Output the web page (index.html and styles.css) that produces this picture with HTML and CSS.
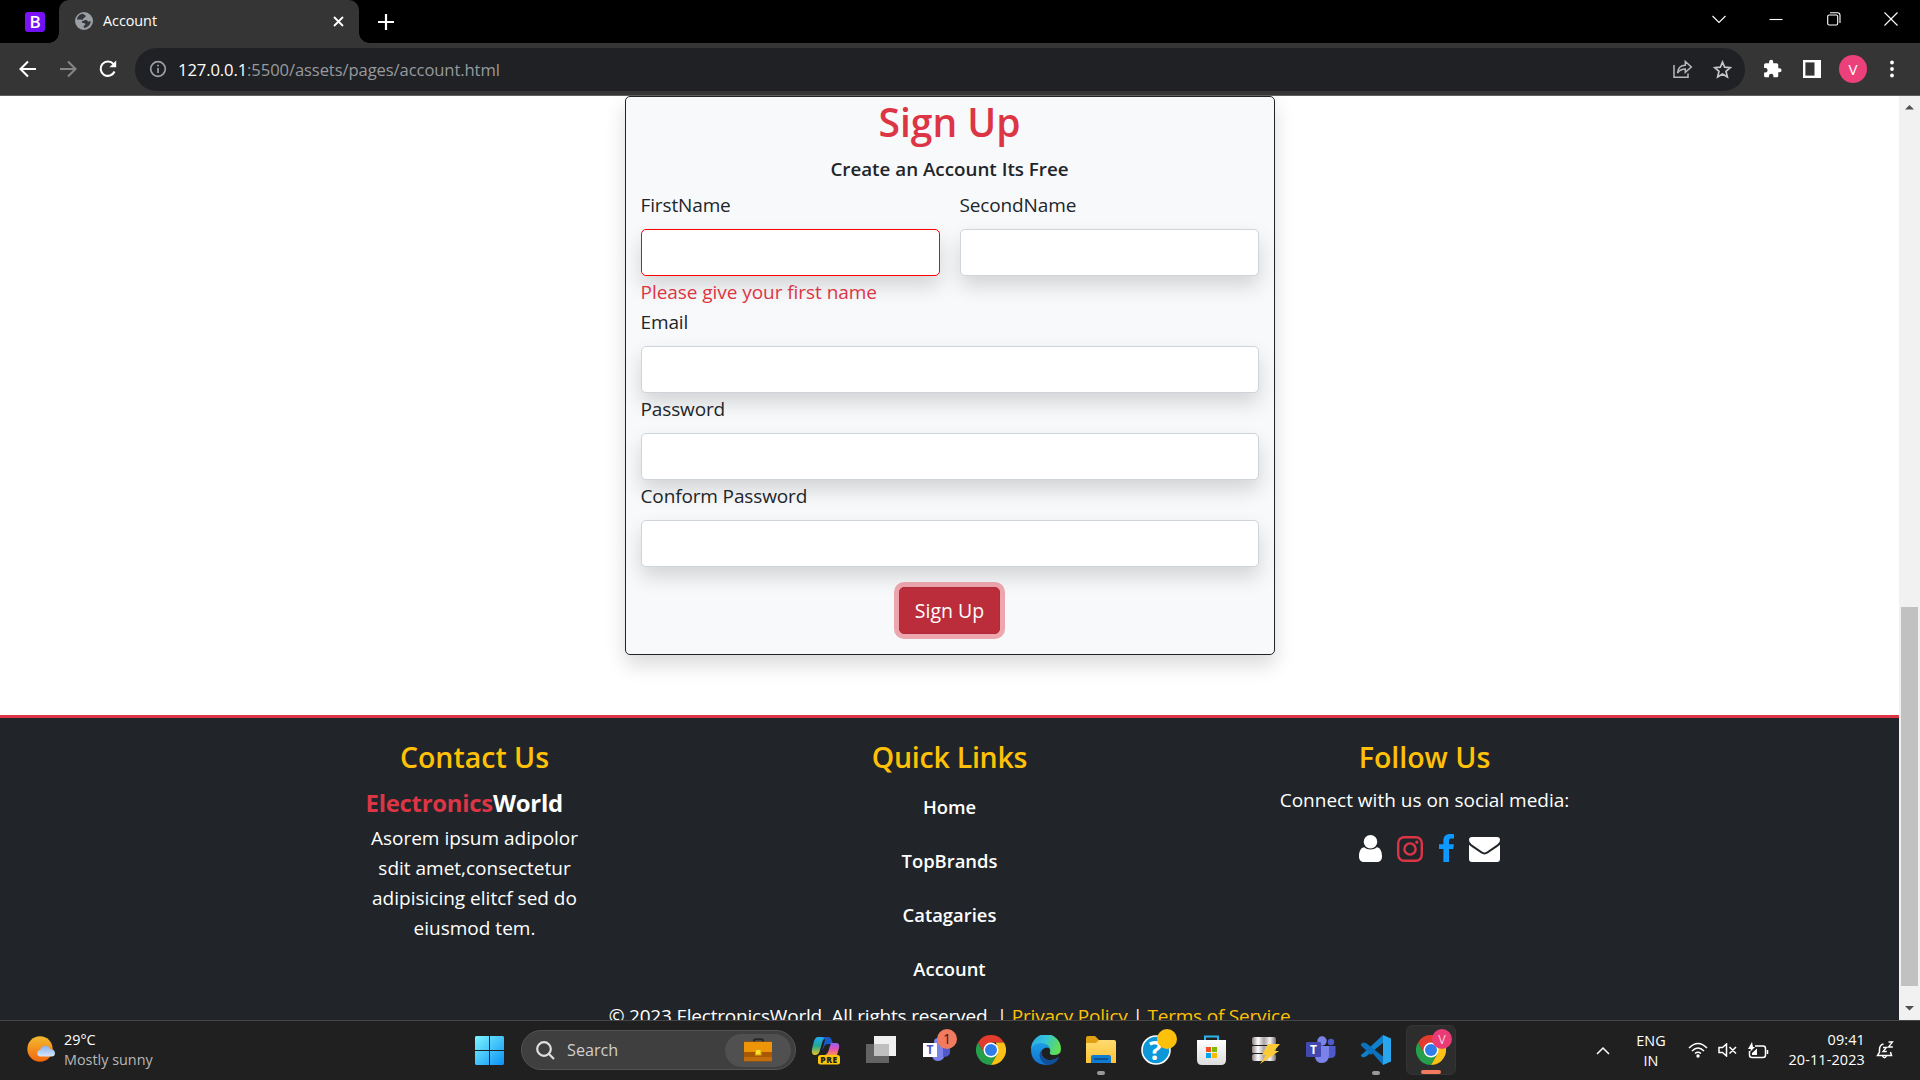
FILE: index.html
```html
<!DOCTYPE html>
<html lang="en">
<head>
<meta charset="utf-8">
<title>Account</title>
<link rel="stylesheet" href="styles.css">
</head>
<body>
<svg class="defs" width="0" height="0" aria-hidden="true">
  <defs>
    <linearGradient id="win" x1="0" y1="0" x2="1" y2="1"><stop offset="0" stop-color="#7df5ff"/><stop offset="1" stop-color="#0a91f5"/></linearGradient>
    <linearGradient id="sun" x1="0" y1="0" x2="0" y2="1"><stop offset="0" stop-color="#f3bb2f"/><stop offset="1" stop-color="#f4650d"/></linearGradient>
    <linearGradient id="cloud" x1="0" y1="0" x2="0" y2="1"><stop offset="0" stop-color="#85b1f4"/><stop offset="1" stop-color="#d9e6fa"/></linearGradient>
    <linearGradient id="copA" x1="0" y1="0" x2="0" y2="1"><stop offset="0" stop-color="#20a9f5"/><stop offset=".5" stop-color="#22a895"/><stop offset="1" stop-color="#f0c320"/></linearGradient>
    <linearGradient id="copB" x1="0" y1="0" x2="0" y2="1"><stop offset="0" stop-color="#9460f3"/><stop offset=".5" stop-color="#e052b5"/><stop offset="1" stop-color="#fd9151"/></linearGradient>
    <linearGradient id="edgeA" x1="0" y1="0" x2="1" y2=".3"><stop offset="0" stop-color="#2aa5e8"/><stop offset=".5" stop-color="#34c3dc"/><stop offset="1" stop-color="#61dd57"/></linearGradient>
    <linearGradient id="edgeB" x1="0" y1="0" x2="0" y2="1"><stop offset="0" stop-color="#1d9de4"/><stop offset="1" stop-color="#1170cf"/></linearGradient>
    <linearGradient id="folder" x1="0" y1="0" x2="0" y2="1"><stop offset="0" stop-color="#ffdb70"/><stop offset="1" stop-color="#ffc233"/></linearGradient>
    <linearGradient id="metal" x1="0" y1="0" x2="1" y2="0"><stop offset="0" stop-color="#8b8280"/><stop offset=".25" stop-color="#fff"/><stop offset=".5" stop-color="#aaa3a1"/><stop offset=".75" stop-color="#f4f2f2"/><stop offset="1" stop-color="#79706e"/></linearGradient>
    <linearGradient id="bag" x1="0" y1="0" x2="0" y2="1"><stop offset="0" stop-color="#fff"/><stop offset="1" stop-color="#dcdcdc"/></linearGradient>
    <symbol id="chrome" viewBox="0 0 30 30">
      <path d="M2 7.5A15 15 0 0 1 28 7.5H15V15L8.5 18.7Z" fill="#e33b2e"/>
      <path d="M2 7.5A15 15 0 0 0 15 30L21.5 18.8 8.5 18.7Z" fill="#259f4b"/>
      <path d="M28 7.5A15 15 0 0 1 15 30L21.5 18.8 20 7.5Z" fill="#fbc116"/>
      <circle cx="15" cy="15" r="7.5" fill="#fff"/><circle cx="15" cy="15" r="6" fill="#2f7de9"/>
    </symbol>
  </defs>
</svg>

<header class="browser">
  <div class="tabstrip">
    <div class="pinned"><span>B</span></div>
    <div class="tab">
      <svg width="18" height="18" viewBox="0 0 18 18"><circle cx="9" cy="9" r="9" fill="#9aa0a6"/><path d="M8 1.8C9 3 11 2.8 10.600 4.500 10.300 5.700 8.500 5.500 8.300 6.800 8 8 7 7.800 6 7.500L2 7.600C2.400 4.500 4.800 2 8 1.800Z M9.500 8.300C11 7.500 12.500 8.200 13 9.500L15.800 9.300C15.500 12.800 12.700 15.700 9 16L8.600 14.500C8.500 13.500 10.600 13 10.400 12 10.200 11 7 11.500 6.800 10 6.900 9 8.500 9 9.500 8.300Z" fill="#35363a"/></svg>
      <span class="tab-title">Account</span>
      <svg width="11" height="11" viewBox="0 0 11 11" stroke="#fff" stroke-width="1.800"><path d="M1 1 10 10M10 1 1 10"/></svg>
    </div>
    <svg class="newtab" width="16" height="16" viewBox="0 0 16 16" stroke="#fff" stroke-width="2.200"><path d="M8 0V16M0 8H16"/></svg>
    <div class="window-buttons">
      <svg width="14" height="14" viewBox="0 0 14 14"><path d="M.5 4 7 10.500 13.500 4"/></svg>
      <svg width="14" height="14" viewBox="0 0 14 14"><path d="M.5 7.500H13.500"/></svg>
      <svg width="14" height="14" viewBox="0 0 14 14"><rect x=".7" y="3" width="10" height="10" rx="1.500"/><path d="M3 .8H10.500Q13 .8 13 3.300V11"/></svg>
      <svg width="14" height="14" viewBox="0 0 14 14"><path d="M.5 .5 13.500 13.500M13.500 .5 .5 13.500"/></svg>
    </div>
  </div>
  <div class="toolbar">
    <div class="nav-buttons">
      <svg width="20" height="20" viewBox="0 0 20 20"><path d="M18 10H3M10 2.500 2.500 10 10 17.500"/></svg>
      <svg class="dim" width="20" height="20" viewBox="0 0 20 20"><path d="M2 10H17M10 2.500 17.500 10 10 17.500"/></svg>
      <svg width="20" height="20" viewBox="0 0 20 20"><path d="M16.500 12.500A7.200 7.200 0 1 1 15.500 5.200L17 7"/><path d="M18.200 1.500V8.300H11.400Z" fill="#fff" stroke="none"/></svg>
    </div>
    <div class="omnibox">
      <svg width="18" height="18" viewBox="0 0 18 18" fill="none" stroke="#9aa0a6" stroke-width="1.700"><circle cx="9" cy="9" r="7.300"/><path d="M9 8V13M9 4.800V6.600"/></svg>
      <span class="url"><b>127.0.0.1</b>:5500/assets/pages/account.html</span>
      <svg class="share" width="20" height="20" viewBox="0 0 20 20" fill="none" stroke="#b5b8bc" stroke-width="1.500"><path d="M1 6V18.300H15V14.500"/><path d="M4.500 14C5 8.500 8.500 6.300 12.300 6.200V2.500L18.300 8 12.300 13.300V9.900C9 9.900 6.500 11 4.500 14Z"/></svg>
      <svg width="19" height="19" viewBox="0 0 20 20" fill="none" stroke="#c4c7ca" stroke-width="1.800"><path d="M10 2.200 12.300 7.600 18.200 8.100 13.700 12 15.100 17.800 10 14.700 4.900 17.800 6.300 12 1.800 8.100 7.700 7.600Z"/></svg>
    </div>
    <div class="actions">
      <svg width="20" height="20" viewBox="0 0 24 24" fill="#fff"><path d="M21 11h-1.500V7c0-1.100-.9-2-2-2h-4V3.500a2.500 2.500 0 0 0-5 0V5h-4c-1.100 0-2 .9-2 2v3.800H4a2.700 2.700 0 0 1 0 5.400H2.500V20c0 1.100.9 2 2 2h3.800v-1.500a2.700 2.700 0 0 1 5.400 0V22h3.800c1.100 0 2-.9 2-2v-4H21a2.500 2.500 0 0 0 0-5Z"/></svg>
      <svg width="18" height="18" viewBox="0 0 18 18"><rect x="1.200" y="1.200" width="15.600" height="15.600" fill="none" stroke="#fff" stroke-width="2.400"/><path d="M11.500 1H17V17H11.500Z" fill="#fff"/></svg>
      <span class="avatar">V</span>
      <svg width="6" height="18" viewBox="0 0 6 18" fill="#fff"><circle cx="3" cy="2.500" r="1.900"/><circle cx="3" cy="9" r="1.900"/><circle cx="3" cy="15.500" r="1.900"/></svg>
    </div>
  </div>
</header>

<div class="viewport">
  <div class="page">
    <main class="main">
      <form class="signup">
        <h1>Sign Up</h1>
        <h5>Create an Account Its Free</h5>
        <div class="names">
          <div class="field"><label for="first">FirstName</label><input id="first" class="invalid" type="text"><p class="error">Please give your first name</p></div>
          <div class="field"><label for="second">SecondName</label><input id="second" type="text"></div>
        </div>
        <div class="field"><label for="email">Email</label><input id="email" type="text"></div>
        <div class="field"><label for="pass">Password</label><input id="pass" type="password"></div>
        <div class="field"><label for="confirm">Conform Password</label><input id="confirm" type="password"></div>
        <button type="button">Sign Up</button>
      </form>
    </main>
    <footer class="footer">
      <div class="columns">
        <section>
          <h3>Contact Us</h3>
          <div class="about">
            <p class="brand"><span>Electronics</span>World</p>
            <p class="blurb">Asorem ipsum adipolor<br>sdit amet,consectetur<br>adipisicing elitcf sed do<br>eiusmod tem.</p>
          </div>
        </section>
        <section>
          <h3 class="links-title">Quick Links</h3>
          <ul class="links"><li>Home</li><li>TopBrands</li><li>Catagaries</li><li>Account</li></ul>
        </section>
        <section>
          <h3>Follow Us</h3>
          <p class="connect">Connect with us on social media:</p>
          <div class="social">
            <svg width="23" height="27" viewBox="0 0 23 27" fill="#fff"><path d="M5.200 12.300C2 12.600 0 16 0 21.500 0 24.800 2 27 4.700 27H18.300C21 27 23 24.800 23 21.500 23 16 21 12.600 17.800 12.300 14.500 15.300 8.500 15.300 5.200 12.300Z"/><circle cx="11.500" cy="6.800" r="6.800"/></svg>
            <svg width="26" height="26" viewBox="0 0 26 26" fill="none" stroke="#dc3545" stroke-width="2.400"><rect x="1.200" y="1.200" width="23.600" height="23.600" rx="6"/><circle cx="13" cy="13" r="5.600"/><circle cx="19.800" cy="6.200" r="1.600" fill="#dc3545" stroke="none"/></svg>
            <svg width="15" height="28" viewBox="0 0 15 28" fill="#0d99ff"><path d="M15 .2V4.600H12.400C10.400 4.600 10 5.600 10 7V10.200H14.900L14.200 15.100H10V28H4.400V15.100H0V10.200H4.400V6.500C4.400 2.300 7 0 10.900 0 12.800 0 14.400.1 15 .2Z"/></svg>
            <svg width="31" height="25" viewBox="0 0 31 25" fill="#fff"><path d="M0 3Q0 0 3 0H28Q31 0 31 3 31 5.500 28.500 7.200L18 14.500Q15.500 16.400 13 14.500L2.500 7.200Q0 5.500 0 3ZM0 7.800Q1 8.800 12 16.300 15.500 18.600 19 16.300 30 8.800 31 7.800V22Q31 25 28 25H3Q0 25 0 22Z"/></svg>
          </div>
        </section>
      </div>
      <p class="copyright">© 2023 ElectronicsWorld. All rights reserved. | <span>Privacy Policy</span> | <span>Terms of Service</span></p>
    </footer>
  </div>
  <div class="scrollbar">
    <svg width="21" height="20" viewBox="0 0 21 20"><path d="M6 13.500 10.500 9 15 13.500Z" fill="#505050"/></svg>
    <div class="track"><div class="thumb"></div></div>
    <svg width="21" height="20" viewBox="0 0 21 20"><path d="M6 6 10.500 10.500 15 6Z" fill="#505050"/></svg>
  </div>
</div>

<footer class="taskbar">
  <div class="weather">
    <svg width="28" height="26" viewBox="0 0 28 26"><circle cx="13" cy="13" r="12.700" fill="url(#sun)"/><path d="M13 20.500A3.300 3.300 0 0 1 13 14Q14.500 9.500 19 9.700 22 10 23 13 27.500 13 28 17 28 20.500 24.500 20.500Z" fill="url(#cloud)"/></svg>
    <p><strong>29°C</strong><br>Mostly sunny</p>
  </div>
  <svg class="start" width="29" height="29" viewBox="0 0 29 29" fill="url(#win)"><path d="M1 0H14V14H0V1ZM15 0H28L29 1V14H15ZM0 15H14V29H1L0 28ZM15 15H29V28L28 29H15Z"/></svg>
  <div class="search">
    <svg width="19" height="19" viewBox="0 0 19 19" fill="none" stroke="#dfdfdf" stroke-width="2.200"><circle cx="8" cy="8" r="6.800"/><path d="M13 13 18 18"/></svg>
    <span>Search</span>
    <div class="highlight"><svg width="28" height="24" viewBox="0 0 28 24"><path d="M10 4V2.500Q10 1.300 12 1.300H17Q19 1.300 19 2.500V4" fill="none" stroke="#25282b" stroke-width="2"/><rect y="3.500" width="28" height="20" rx="1" fill="#a95903"/><path d="M0 4H28V14H0Z" fill="#ed9407"/><path d="M0 19H28V23H0Z" fill="#c16d0b"/><rect x="11.500" y="11.500" width="5.500" height="5.500" fill="#ffdd2b" stroke="#d5a40b"/></svg></div>
  </div>
  <div class="apps">
    <div class="app"><svg width="30" height="30" viewBox="0 0 30 30"><path d="M6 2H15Q12 4 11 8L9 15Q8 20 4 20 0 20 1 14L3 6Q4 3 6 2Z" fill="url(#copA)"/><path d="M11 2H17Q20 2 21 6L22 9H17Q14 9 13 12L11 16 14 5Q14 3 11 2Z" fill="#1b59c8"/><path d="M20 8H25Q29 8 28 13L26 20H14Q17 19 18 14Z" fill="url(#copB)"/><rect x="7" y="20" width="22" height="9.500" rx="2.500" fill="#fdc70c"/><text x="18" y="27.700" text-anchor="middle" font-size="8.500" font-weight="800" letter-spacing=".6" fill="#222">PRE</text></svg></div>
    <div class="app"><svg width="30" height="30" viewBox="0 0 30 30"><path d="M8 1H30V21H8Z" fill="#f0f0f0"/><path d="M0 9H23V28H0Z" fill="#636363"/><path d="M8 9H23V21H8Z" fill="#bfbfbf"/></svg></div>
    <div class="app"><svg width="34" height="34" viewBox="0 0 34 34"><circle cx="15" cy="13" r="4" fill="#7b83eb"/><path d="M9 16H22V25Q21 32 15 32 10 32 9 27Z" fill="#7b83eb"/><path d="M20 16H27V24Q26 28 20 28Z" fill="#5059c9"/><rect y="14" width="14" height="14" fill="#fff"/><text x="7" y="25" text-anchor="middle" font-size="12" font-weight="700" fill="#4b53bc">T</text><circle cx="24" cy="10" r="10" fill="#f17a5f"/><text x="24" y="15" text-anchor="middle" font-size="14" fill="#222">1</text></svg></div>
    <div class="app"><svg width="30" height="30"><use href="#chrome"/></svg></div>
    <div class="app"><svg width="30" height="30" viewBox="0 0 30 30"><path d="M0 14A15 15 0 0 1 30 14Q30 20 23 20 18 20 19 17 20 14 17 11 10 6 0 14Z" fill="url(#edgeA)"/><path d="M0 14Q3 8 10 8 17 8 19 14 16 11 12 14 8 18 13 23 19 28 28 22 23 30 15 30 0 29 0 14Z" fill="url(#edgeB)"/><path d="M12 14Q8 18 13 23 19 28 28 22 25 30 16 30 9 27 8.500 20 9 16 12 14Z" fill="#124f9b"/></svg></div>
    <div class="app running"><svg width="30" height="28" viewBox="0 0 30 28"><path d="M0 2Q0 0 2 0H9L13 4V9H0Z" fill="#e0a014"/><path d="M0 7H10L13 4H28Q30 4 30 6V27H0Z" fill="url(#folder)"/><path d="M5 27V21Q5 19 7 19H23Q25 19 25 21V27Z" fill="#117ad1"/><path d="M8 23H22" stroke="#07477e" stroke-width="1.500"/></svg></div>
    <div class="app"><svg width="36" height="36" viewBox="0 0 36 36"><circle cx="15" cy="21" r="14" fill="#0c97d8" stroke="#fff" stroke-width="1.600"/><text x="14.500" y="31" text-anchor="middle" font-size="27" font-weight="700" fill="#fff">?</text><circle cx="26" cy="10" r="10" fill="#fdc10c"/></svg></div>
    <div class="app"><svg width="29" height="30" viewBox="0 0 29 30"><path d="M8 7V1.500H21V7" fill="none" stroke="#2cb4e8" stroke-width="2"/><path d="M0 5H29V25Q29 30 24 30H5Q0 30 0 25Z" fill="url(#bag)"/><path d="M9 12H14V17H9Z" fill="#f25022"/><path d="M15 12H20V17H15Z" fill="#7fba00"/><path d="M9 18H14V23H9Z" fill="#00a4ef"/><path d="M15 18H20V23H15Z" fill="#ffb900"/></svg></div>
    <div class="app"><svg width="28" height="28" viewBox="0 0 28 28" fill="url(#metal)"><rect y="1" width="24" height="8" rx="2"/><rect y="10" width="24" height="7" rx="1"/><rect y="18" width="24" height="7" rx="2"/><path d="M16 8H28L22 15H27L8 28 14 19H10Z" fill="#fcca36"/></svg></div>
    <div class="app"><svg width="30" height="28" viewBox="0 0 30 28"><circle cx="25" cy="6" r="3.200" fill="#5059c9"/><path d="M21 10H29.500V18Q29 22 25 22H21Z" fill="#5059c9"/><circle cx="16" cy="5" r="4.700" fill="#7b83eb"/><path d="M9 10H23V20Q22 27 16 27 10 27 9 21Z" fill="#7b83eb"/><rect y="6" width="15" height="15" rx="1" fill="#4149b1"/><text x="7.500" y="18" text-anchor="middle" font-size="12" font-weight="700" fill="#fff">T</text></svg></div>
    <div class="app running"><svg width="30" height="30" viewBox="0 0 30 30"><path d="M22 0 2 18.500 0 20V21L2 22.500 5 21.500 22 8Z" fill="#0f80cd"/><path d="M2 7.500 22 30V21.500L5 8Z M2 7.500 0 9V10.500L10 20 13 16.500Z" fill="#0b73bd"/><path d="M22 0 30 3.500V26.500L22 30Z" fill="#2aa6ee"/></svg></div>
    <div class="app running active"><svg width="36" height="36" viewBox="0 0 36 36"><use href="#chrome" x="0" y="6" width="30" height="30"/><circle cx="26" cy="10" r="10" fill="#ea3b76"/><text x="26" y="14.500" text-anchor="middle" font-size="12.500" fill="#fbd0de">V</text></svg></div>
  </div>
  <div class="tray">
    <svg class="up" width="14" height="9" viewBox="0 0 14 9"><path d="M1 8 7 2 13 8"/></svg>
    <p class="lang">ENG<br>IN</p>
    <svg class="wifi" width="20" height="16" viewBox="0 0 20 16"><path d="M1 6Q10-3 19 6M4 9Q10 3 16 9M7 11.500Q10 9 13 11.500"/><circle cx="10" cy="14" r="1.700" fill="#fff" stroke="none"/></svg>
    <svg class="volume" width="19" height="14" viewBox="0 0 19 14"><path d="M1 4.500H4.500L8.500 1V13L4.500 9.500H1ZM11.500 4 18 10.500M18 4 11.500 10.500"/></svg>
    <svg class="battery" width="21" height="17" viewBox="0 0 21 17"><path d="M7 4H15Q17.500 4 17.500 6.500V13Q17.500 15.500 15 15.500H4Q1.500 15.500 1.500 13V9M19.500 8V12"/><path d="M4 0 0 7H3L2 10 7 5H5ZM4 13V11L9 6.500V13Z" fill="#fff" stroke="none"/></svg>
    <p class="clock">09:41<br>20-11-2023</p>
    <svg class="bell" width="18" height="18" viewBox="0 0 18 18"><path d="M7.500 3Q3.500 4 3.500 8.500V11L1.500 14.500H15.500L14.500 11M6.500 15Q8.500 18.500 10.500 15"/><path d="M7 6.500H10.500L7 10.500H10.800M12.500 1H16.500L12.500 6H16.800" stroke-width="1.300"/></svg>
  </div>
</footer>
</body>
</html>
```
FILE: styles.css
```css
* { box-sizing: border-box; }
html, body { margin: 0; height: 100%; }
body {
  display: flex; flex-direction: column; height: 1080px; overflow: hidden;
  background: #fff; color: #212529;
  font: 19px/30px "Open Sans", "Noto Sans", sans-serif;
}
h1, h3, h5, p, ul { margin: 0; padding: 0; }
svg { display: block; flex: none; }
.defs { position: absolute; }

/* browser chrome */
.browser { flex: none; height: 96px; background: #353535; border-bottom: 1px solid #5e5e5e; }
.tabstrip { display: flex; align-items: center; height: 43px; background: #000; }
.pinned { width: 59px; padding-left: 25px; }
.pinned span { display: block; width: 20px; height: 20px; border-radius: 3px; background: linear-gradient(135deg, #8412fa, #6b10f3); color: #fff; font-size: 17px; font-weight: 600; line-height: 20px; text-align: center; }
.tab { position: relative; display: flex; align-items: center; width: 300px; height: 43px; padding: 0 15px 1px 16px; border-radius: 10px 10px 0 0; background: #353535; }
.tab::before, .tab::after { content: ""; position: absolute; bottom: 0; width: 10px; height: 10px; }
.tab::before { left: -10px; background: radial-gradient(circle at 0 0, transparent 9.5px, #353535 10px); }
.tab::after { right: -10px; background: radial-gradient(circle at 100% 0, transparent 9.5px, #353535 10px); }
.tab-title { flex: 1; margin-left: 10px; color: #fff; font-size: 14.4px; letter-spacing: -0.05px; }
.newtab { margin-left: 19px; }
.window-buttons { display: flex; gap: 43.500px; margin-left: auto; padding: 0 22px 6px 0; fill: none; stroke: #fff; stroke-width: 1.1; }
.toolbar { display: flex; align-items: center; height: 52px; }
.nav-buttons { display: flex; gap: 20px; width: 135px; padding-left: 18px; fill: none; stroke: #fff; stroke-width: 2.1; }
.dim { stroke: #858585; }
.omnibox { display: flex; align-items: center; width: 1610px; height: 43px; padding: 0 13px; border-radius: 22px; background: #202124; }
.omnibox svg:first-child { margin-left: 1px; }
.url { margin-left: 11px; padding-top: 1px; color: #969a9e; font-size: 16.6px; letter-spacing: -0.1px; }
.url b { color: #fff; font-weight: 400; }
.share { margin: 0 20px 0 auto; }
.actions { display: flex; flex: 1; align-items: center; gap: 20px; padding-left: 17px; }
.actions svg:nth-child(2) { margin-left: 1px; }
.actions svg:last-child { margin-left: 4px; }
.avatar { width: 28px; height: 28px; margin: 0 -2px 0 -2px; border-radius: 50%; background: #ec407a; color: #fff; font-size: 15px; line-height: 28px; text-align: center; }

/* scrolled page */
.viewport { display: flex; flex: none; height: 924px; overflow: hidden; }
.page { flex: 1; }
.main { display: flex; justify-content: center; height: 619px; }
.signup { width: 650px; height: 559px; padding: 0 15px; border: 1px solid #212529; border-radius: 5px; background: #f8f9fa; box-shadow: 0 10px 20px rgba(0, 0, 0, .15); text-align: center; }
h1 { margin-bottom: 10px; color: #dc3545; font-size: 39px; font-weight: 600; line-height: 50px; }
h5 { margin-bottom: 8px; font-size: 18.8px; font-weight: 600; line-height: 24px; }
.names { display: grid; grid-template-columns: 1fr 1fr; gap: 20px; }
.field { text-align: left; }
label { display: block; height: 30px; margin-bottom: 10px; line-height: 32px; letter-spacing: -0.13px; }
input { display: block; width: 100%; height: 47px; border: 1px solid #ced4da; border-radius: 5px; background: #fff; box-shadow: 0 10px 20px rgba(0, 0, 0, .15); }
.invalid { border-color: #f00; }
.error { height: 30px; color: #dc3545; line-height: 32px; letter-spacing: -0.05px; }
button { width: 101px; height: 47px; margin-top: 20px; padding: 1px 0 0; border: 1px solid #b02a37; border-radius: 5px; background: #bb2d3b; box-shadow: 0 0 0 5px rgba(225, 83, 97, .5); color: #fff; font: inherit; font-size: 19.5px; }
.signup .names { margin-top: 0; }

.footer { height: 400px; padding-top: 21px; border-top: 3px solid #dc3545; background: #212529; color: #fff; text-align: center; }
.columns { display: grid; grid-template-columns: repeat(3, 475px); justify-content: center; height: 262px; }
.columns section { display: flex; flex-direction: column; align-items: center; }
h3 { margin-bottom: 8px; color: #ffc107; font-size: 28.5px; font-weight: 600; line-height: 36px; }
.links-title { letter-spacing: -0.25px; }
.about { width: 216px; }
.brand { margin: 1px 0 1px -1px; color: #fff; font-size: 23.9px; font-weight: 700; line-height: 38px; text-align: left; letter-spacing: -0.25px; }
.brand span { color: #dc3545; }
.links { list-style: none; padding-top: 9px; font-size: 18.4px; font-weight: 600; }
.links li { height: 54px; }
.connect { padding-top: 2px; }
.social { display: flex; align-items: flex-end; gap: 15.5px; margin: 19px 0 0 10px; }
.copyright { letter-spacing: -0.2px; }
.copyright span { color: #ffc107; }

.scrollbar { display: flex; flex-direction: column; width: 21px; background: #f1f1f1; }
.track { flex: 1; padding: 491px 2px 0; }
.thumb { height: 379px; background: #c1c1c1; }

/* taskbar */
.taskbar { display: flex; flex: none; align-items: center; height: 60px; padding-bottom: 1px; border-top: 1px solid #464646; background: #202020; color: #fff; font-size: 14.4px; line-height: 20px; }
.weather { display: flex; align-items: center; gap: 9px; width: 475px; padding-left: 27px; color: #b8b8b8; }
.weather svg { margin-bottom: 3px; }
.weather strong { color: #fff; font-weight: 400; }
.search { display: flex; align-items: center; width: 275px; height: 40px; margin-left: 17px; padding: 0 4px 0 14px; border: 1px solid #535353; border-radius: 20px; background: #3f3f3f; color: #cfcfcf; font-size: 16.2px; }
.search span { flex: 1; margin-left: 12px; }
.highlight { display: flex; align-items: center; justify-content: center; width: 66px; height: 33px; border-radius: 17px; background: #505050; }
.apps { display: flex; margin-left: 2.5px; }
.app { position: relative; display: flex; align-items: center; justify-content: center; width: 55px; height: 50px; }
.app:nth-child(3) svg { margin: 0 0 8px 8px; }
.app:nth-child(7) svg, .active svg { margin: 0 0 6px 6px; }
.active { width: 50px; margin-left: 2.5px; border: 1px solid #343434; border-radius: 6px; background: #2d2d2d; }
.running::after { content: ""; position: absolute; bottom: 0; left: 50%; width: 8px; height: 4px; margin-left: -4px; border-radius: 2px; background: #999; }
.active::after { width: 20px; margin-left: -10px; background: #f17a5f; }
.tray { display: flex; flex: 1; align-items: center; margin-left: 140px; fill: none; stroke: #fff; stroke-width: 1.5; }
.lang { width: 32px; margin-left: 25px; padding-top: 1px; text-align: center; }
.wifi { margin-left: 21px; }
.volume { margin-left: 10px; }
.battery { margin-left: 11px; }
.clock { width: 85px; margin-left: 11px; text-align: right; letter-spacing: 0.15px; }
.bell { margin-left: 11px; }
```
